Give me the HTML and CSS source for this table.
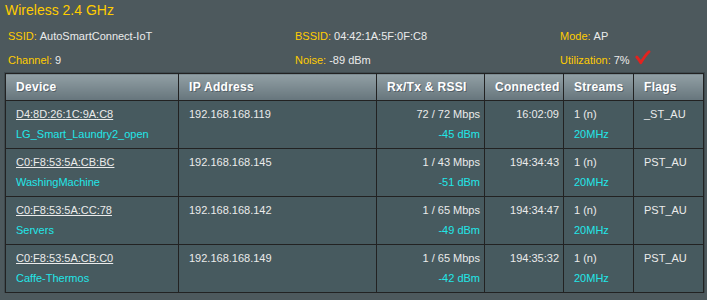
FILE: index.html
```html
<!DOCTYPE html>
<html>
<head>
<meta charset="utf-8">
<link rel="stylesheet" href="styles.css">
</head>
<body>
<div class="page">
  <div class="title">Wireless 2.4 GHz</div>
  <div class="info">
    <div class="item"><span class="lbl">SSID:</span> AutoSmartConnect-IoT</div>
    <div class="item"><span class="lbl">BSSID:</span> 04:42:1A:5F:0F:C8</div>
    <div class="item"><span class="lbl">Mode:</span> AP</div>
    <div class="item"><span class="lbl">Channel:</span> 9</div>
    <div class="item"><span class="lbl">Noise:</span> -89 dBm</div>
    <div class="item"><span class="lbl">Utilization:</span> 7%<svg class="check" width="16" height="16" viewBox="0 0 16 16"><path d="M1.8 7 C3.5 9 4.8 11 5.8 12.8 C8 9 10.5 5 14 1.8" fill="none" stroke="#e2231f" stroke-width="2.8" stroke-linecap="round" stroke-linejoin="round"/></svg></div>
  </div>
  <table class="clients">
    <colgroup>
      <col class="c-dev"><col class="c-ip"><col class="c-rx"><col class="c-con"><col class="c-str"><col class="c-flg">
    </colgroup>
    <thead>
      <tr><th>Device</th><th>IP Address</th><th>Rx/Tx &amp; RSSI</th><th>Connected</th><th>Streams</th><th>Flags</th></tr>
    </thead>
    <tbody>
      <tr>
        <td><span class="mac">D4:8D:26:1C:9A:C8</span><br><span class="cy">LG_Smart_Laundry2_open</span></td>
        <td>192.168.168.119</td>
        <td class="r">72 / 72 Mbps<br><span class="cy">-45 dBm</span></td>
        <td class="r">16:02:09</td>
        <td>1 (n)<br><span class="cy">20MHz</span></td>
        <td>_ST_AU</td>
      </tr>
      <tr>
        <td><span class="mac">C0:F8:53:5A:CB:BC</span><br><span class="cy">WashingMachine</span></td>
        <td>192.168.168.145</td>
        <td class="r">1 / 43 Mbps<br><span class="cy">-51 dBm</span></td>
        <td class="r">194:34:43</td>
        <td>1 (n)<br><span class="cy">20MHz</span></td>
        <td>PST_AU</td>
      </tr>
      <tr>
        <td><span class="mac">C0:F8:53:5A:CC:78</span><br><span class="cy">Servers</span></td>
        <td>192.168.168.142</td>
        <td class="r">1 / 65 Mbps<br><span class="cy">-49 dBm</span></td>
        <td class="r">194:34:47</td>
        <td>1 (n)<br><span class="cy">20MHz</span></td>
        <td>PST_AU</td>
      </tr>
      <tr>
        <td><span class="mac">C0:F8:53:5A:CB:C0</span><br><span class="cy">Caffe-Thermos</span></td>
        <td>192.168.168.149</td>
        <td class="r">1 / 65 Mbps<br><span class="cy">-42 dBm</span></td>
        <td class="r">194:35:32</td>
        <td>1 (n)<br><span class="cy">20MHz</span></td>
        <td>PST_AU</td>
      </tr>
    </tbody>
  </table>
</div>
</body>
</html>
```

FILE: styles.css
```css
html, body {
  margin: 0;
  padding: 0;
  background: #4d595d;
}
body {
  font-family: "Liberation Sans", Arial, sans-serif;
  font-size: 11px;
  color: #ebebeb;
}
.page {
  padding: 1px 4px 0 5px;
}
.title {
  font-size: 14px;
  line-height: 18px;
  height: 18px;
  color: #ffcc00;
}
.info {
  margin-top: 5px;
  padding-left: 3px;
  display: grid;
  grid-template-columns: 287px 265px 1fr;
  grid-auto-rows: 24px;
  line-height: 24px;
  margin-bottom: 1px;
}
.item {
  white-space: nowrap;
  display: flex;
  align-items: center;
  gap: 3px;
}
.lbl {
  color: #ffcc00;
}
.check {
  margin-left: 2px;
  margin-top: -4px;
}
.clients {
  border-collapse: collapse;
  width: 698px;
  table-layout: fixed;
  border: 1px solid #222;
  box-shadow: 0 0 0 1px #3f4a4e;
}
.c-dev { width: 173px; }
.c-ip { width: 198px; }
.c-rx { width: 108px; }
.c-con { width: 79px; }
.c-str { width: 70px; }
.c-flg { width: 70px; }
.clients th {
  height: 26px;
  padding: 0 0 0 10px;
  text-align: left;
  font-size: 12px;
  font-weight: bold;
  letter-spacing: 0.3px;
  color: #fff;
  text-shadow: 1px 1px 0 rgba(40, 50, 60, 0.45);
  background: linear-gradient(#92a0a5, #66757c);
  border: 1px solid #222;
  white-space: nowrap;
  overflow: hidden;
}
.clients td {
  background: #475a5f;
  border: 1px solid #222;
  vertical-align: top;
  padding: 3px 4px 4px 10px;
  height: 40px;
  line-height: 20px;
  white-space: nowrap;
}
.clients td.r {
  text-align: right;
}
.mac {
  text-decoration: underline;
}
.cy {
  color: #22e6e8;
}
```
